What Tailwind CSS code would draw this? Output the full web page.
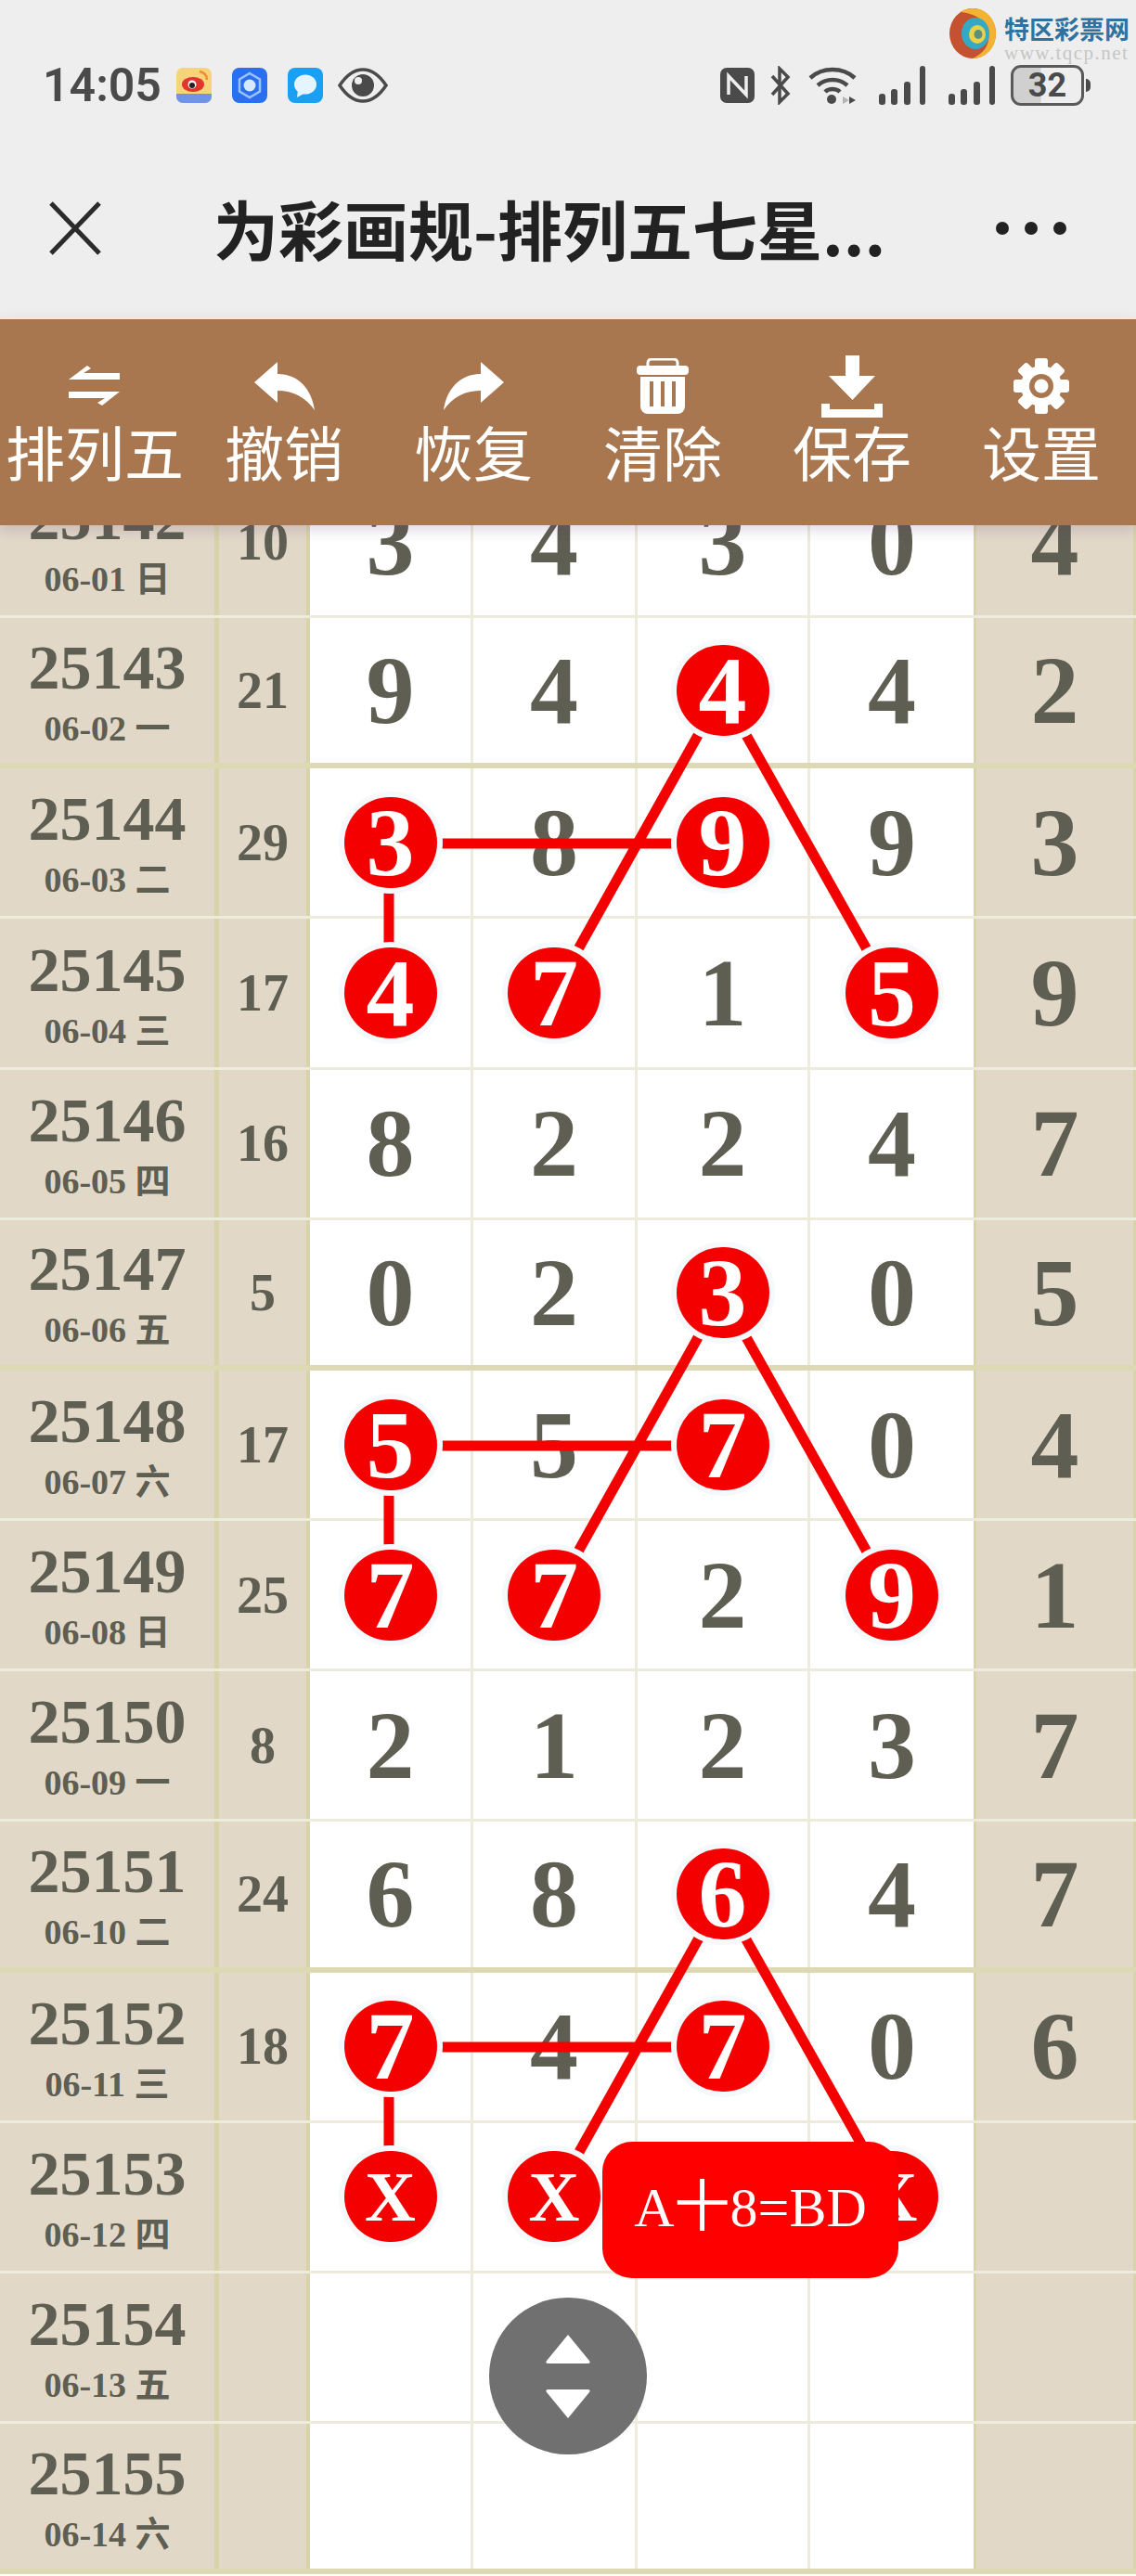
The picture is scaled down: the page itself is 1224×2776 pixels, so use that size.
<!DOCTYPE html>
<html lang="zh">
<head>
<meta charset="UTF-8">
<meta name="viewport" content="width=device-width, initial-scale=1.0">
<title>为彩画规-排列五七星</title>
<script src="https://cdn.jsdelivr.net/npm/@tailwindcss/browser@4"></script>
</head>
<body class="bg-white">
<div class="relative w-[1224px] h-[2776px] overflow-hidden font-['Liberation_Serif','Noto_Sans_CJK_SC',serif]">

  <!-- status bar + title -->
  <header class="relative h-[341px] bg-[#eeeeee] font-['Noto_Sans_CJK_SC',sans-serif]">
    <div class="flex items-center h-[44px] pt-[70px] pl-[46px] box-content">
      <span class="w-[144px] font-['Roboto',sans-serif] font-semibold text-[50px] leading-none text-[#4a4a4a]">14:05</span>
      <svg class="w-[38px] h-[38px]" viewBox="0 0 38 38"><rect width="38" height="38" rx="7" fill="#f5d47c"/><path d="M0 28H38V31a7 7 0 0 1-7 7H7a7 7 0 0 1-7-7Z" fill="#6f93e6"/><ellipse cx="18" cy="18" rx="12" ry="8" fill="#e2352b"/><path d="M25 4C30 5 33 8 33 13" fill="none" stroke="#ef8f2f" stroke-width="2.5"/><circle cx="17" cy="18" r="4.5" fill="#fff"/><circle cx="17" cy="19" r="3" fill="#222"/></svg>
      <svg class="w-[38px] h-[38px] ml-[22px]" viewBox="0 0 38 38"><rect width="38" height="38" rx="8" fill="#2a6ff0"/><path d="M19 6 30 12.5V25.5L19 32 8 25.5V12.5Z" fill="none" stroke="#9cc3ff" stroke-width="2.5"/><circle cx="19" cy="19" r="6.5" fill="#d7e8ff"/></svg>
      <svg class="w-[38px] h-[38px] ml-[22px]" viewBox="0 0 38 38"><rect width="38" height="38" rx="8" fill="#1aa0f2"/><ellipse cx="19" cy="18" rx="12" ry="10.5" fill="#e4f5ff"/><path d="M11 24 10 32 19 27Z" fill="#e4f5ff"/></svg>
      <svg class="w-[54px] h-[38px] ml-[16px]" viewBox="0 0 54 38"><path d="M2 19C10 7 18 2 27 2S44 7 52 19C44 31 36 36 27 36S10 31 2 19Z" fill="none" stroke="#4a4a4a" stroke-width="3.5"/><circle cx="27" cy="19" r="12" fill="#4a4a4a"/><circle cx="22" cy="14" r="4" fill="#eeeeee"/></svg>

      <svg class="w-[37px] h-[38px] ml-[358px]" viewBox="0 0 37 38"><rect width="37" height="38" rx="7" fill="#4a4a4a"/><path d="M9 29V9L28 29V9" fill="none" stroke="#eeeeee" stroke-width="3.5"/></svg>
      <svg class="w-[24px] h-[42px] ml-[16px]" viewBox="0 0 24 42"><path d="M3 11 20 30 11 39V3L20 12 3 31" fill="none" stroke="#4a4a4a" stroke-width="3.5"/></svg>
      <svg class="w-[52px] h-[42px] ml-[18px]" viewBox="0 0 52 42"><path d="M2 13C15 1 37 1 50 13M10 21C19 13 33 13 42 21M18 28C22 24 30 24 34 28" fill="none" stroke="#4a4a4a" stroke-width="4.5"/><circle cx="25" cy="36" r="5" fill="#4a4a4a"/><path d="M37 33 44 37 37 41Z" fill="#b5b5b5"/><path d="M44 33 51 37 44 41Z" fill="#4a4a4a"/></svg>
      <svg class="w-[52px] h-[42px] ml-[23px]" viewBox="0 0 52 42"><rect x="1" y="30" width="7" height="12" rx="3" fill="#4a4a4a"/><rect x="14" y="25" width="7" height="17" rx="3" fill="#4a4a4a"/><rect x="28" y="17" width="7" height="25" rx="3" fill="#4a4a4a"/><rect x="45" y="0" width="6" height="42" rx="3" fill="#4a4a4a"/></svg>
      <svg class="w-[52px] h-[42px] ml-[23px]" viewBox="0 0 52 42"><rect x="1" y="30" width="7" height="12" rx="3" fill="#4a4a4a"/><rect x="14" y="25" width="7" height="17" rx="3" fill="#4a4a4a"/><rect x="28" y="17" width="7" height="25" rx="3" fill="#4a4a4a"/><rect x="45" y="0" width="6" height="42" rx="3" fill="#4a4a4a"/></svg>
      <div class="flex items-center justify-center ml-[16px] w-[79px] h-[44px] rounded-[11px] border-[3px] border-[#5a5a5a] bg-[linear-gradient(90deg,#d0d0d0_0,#d0d0d0_40%,#eeeeee_41%)] font-['Roboto',sans-serif] font-bold text-[36px] leading-none text-[#4a4a4a]">32</div>
      <div class="ml-[2px] w-[5px] h-[14px] rounded-r-full bg-[#4a4a4a]"></div>
    </div>

    <div class="flex items-center h-[100px] mt-[82px] pl-[53px]">
      <svg class="w-[56px] h-[58px]" viewBox="0 0 56 58"><path d="M2 2 54 56M54 2 2 56" fill="none" stroke="#2b2b2b" stroke-width="5"/></svg>
      <h1 class="ml-[121px] w-[760px] font-['Noto_Sans_CJK_SC',sans-serif] font-bold text-[70px] leading-none text-[#222222] whitespace-nowrap">为彩画规-排列五七星...</h1>
      <div class="ml-[83px] flex gap-[17px]">
        <span class="w-[14px] h-[14px] rounded-full bg-[#222222]"></span>
        <span class="w-[14px] h-[14px] rounded-full bg-[#222222]"></span>
        <span class="w-[14px] h-[14px] rounded-full bg-[#222222]"></span>
      </div>
    </div>

    <!-- watermark -->
    <div class="absolute left-[1023px] top-[9px] flex gap-[9px]">
      <svg class="w-[50px] h-[54px]" viewBox="0 0 50 54"><ellipse cx="25" cy="27" rx="25" ry="27" fill="#c4512f"/><path d="M25 0C40 0 50 12 50 27S40 54 25 54C38 48 44 38 42 27S32 6 12 4C16 1 20 0 25 0Z" fill="#f2b233"/><ellipse cx="28" cy="27" rx="15" ry="17" fill="#35a9c4"/><ellipse cx="30" cy="28" rx="9" ry="10" fill="#e8d24a"/><ellipse cx="31" cy="28" rx="4.5" ry="5" fill="#5d8f7c"/></svg>
      <div>
        <div class="mt-[8px] font-['Noto_Sans_CJK_SC',sans-serif] font-bold text-[27px] leading-[27px] text-[#2f729f] whitespace-nowrap">特区彩票网</div>
        <div class="mt-[5px] font-['Liberation_Serif',serif] text-[21px] leading-[16px] tracking-[1.5px] text-[#c6c6c6] whitespace-nowrap">www.tqcp.net</div>
      </div>
    </div>
  </header>

  <!-- toolbar -->
  <nav class="relative z-30 h-[225px] border-t-[3px] border-[#f6e6dc] bg-[#a8764f] shadow-[0_6px_12px_rgba(90,60,110,0.18)] grid grid-cols-6 pt-[39px] font-['Noto_Sans_CJK_SC',sans-serif] text-white text-[64px] leading-[72px] whitespace-nowrap">
    <div class="flex flex-col items-center">
      <div class="flex items-center h-[66px]"><svg class="w-[56px] h-[44px]" viewBox="0 0 56 44" fill="#fff"><path d="M0 15 20 0 24 3 16 8H55V15Z"/><path d="M0 28H55L36 43 31 40 39 35H0Z"/></svg></div>
      <span>排列五</span>
    </div>
    <div class="flex flex-col items-center">
      <div class="flex items-center h-[66px]"><svg class="w-[65px] h-[52px]" viewBox="0 0 65 52" fill="#fff"><path d="M0 22 25 0V13C48 13 62 30 65 52 55 38 42 31 25 31V44Z"/></svg></div>
      <span>撤销</span>
    </div>
    <div class="flex flex-col items-center">
      <div class="flex items-center h-[66px]"><svg class="w-[65px] h-[52px]" viewBox="0 0 65 52" fill="#fff"><path d="M65 22 40 0V13C17 13 3 30 0 52 10 38 23 31 40 31V44Z"/></svg></div>
      <span>恢复</span>
    </div>
    <div class="flex flex-col items-center">
      <div class="flex items-center h-[66px]"><svg class="w-[56px] h-[60px]" viewBox="0 0 56 60" fill="#fff"><path d="M12 9V5a4 4 0 0 1 4-4H40a4 4 0 0 1 4 4V9" fill="none" stroke="#fff" stroke-width="3"/><rect y="8" width="56" height="10" rx="4"/><path d="M4 20H52V52a8 8 0 0 1-8 8H12a8 8 0 0 1-8-8Z"/><rect x="14" y="25" width="4" height="27" fill="#a8764f"/><rect x="26" y="25" width="4" height="27" fill="#a8764f"/><rect x="38" y="25" width="4" height="27" fill="#a8764f"/></svg></div>
      <span>清除</span>
    </div>
    <div class="flex flex-col items-center">
      <div class="flex items-center h-[66px]"><svg class="w-[66px] h-[67px]" viewBox="0 0 66 67" fill="#fff"><path d="M26 0H41V22H58L33.5 48 8 22H26Z"/><path d="M0 52H9V58H57V52H66V67H0Z"/></svg></div>
      <span>保存</span>
    </div>
    <div class="flex flex-col items-center">
      <div class="flex items-center h-[66px]"><svg class="w-[60px] h-[60px]" viewBox="0 0 60 60" fill="#fff"><circle cx="30" cy="30" r="22"/><g><rect x="23" y="0" width="14" height="60" rx="3"/><rect x="23" y="0" width="14" height="60" rx="3" transform="rotate(45 30 30)"/><rect x="23" y="0" width="14" height="60" rx="3" transform="rotate(90 30 30)"/><rect x="23" y="0" width="14" height="60" rx="3" transform="rotate(135 30 30)"/></g><circle cx="30" cy="30" r="13" fill="#a8764f"/><circle cx="30" cy="30" r="7.5" fill="#fff"/></svg></div>
      <span>设置</span>
    </div>
  </nav>

  <!-- lines between the marked numbers -->
  <svg class="absolute left-0 top-0 z-10" width="1224" height="2776" viewBox="0 0 1224 2776" fill="none" stroke="#f50000" stroke-width="11">
    <path d="M596 1071 778 746 961 1071M419 909H778M419 909V1071"/>
    <path d="M596 1720 778 1395 961 1720M419 1558H778M419 1558V1720"/>
    <path d="M596 2369 778 2044 961 2369M419 2206H778M419 2206V2369"/>
  </svg>

  <!-- draw table -->
  <main class="-mt-[62px] text-[#5e5e52] font-bold [&>div]:grid [&>div]:grid-cols-[236px_98px_176px_177px_186px_179px_172px] [&>div]:h-[162.17px] [&>div]:border-b-[3px] [&>div]:border-[#ecebdc] [&>div:nth-child(4n+2)]:border-b-[6px] [&>div:nth-child(4n+2)]:border-[#ddd9b5] *:*:flex *:*:items-center *:*:justify-center *:*:text-[104px] *:*:leading-none [&>div>*:nth-child(-n+2)]:bg-[#e2d8c8] [&>div>*:nth-child(7)]:bg-[#e2d8c8] [&>div>*:nth-child(1)]:flex-col [&>div>*:nth-child(1)]:border-r-[5px] [&>div>*:nth-child(2)]:border-r-[4px] [&>div>*:nth-child(2)]:text-[56px] [&>div>*:nth-child(n+3)]:border-r-[3px] [&>div>*:nth-child(6)]:border-r-[5px] [&>div>*:nth-child(7)]:border-r-0 [&>div>*]:border-[#d8d3ab] [&>div>*:nth-child(n+3):nth-child(-n+5)]:border-[#ecebdc]">

    <div>
      <div><b class="text-[68px]">25142</b><span class="mt-[13px] text-[38px]">06-01 日</span></div><div>10</div><div>3</div><div>4</div><div>3</div><div>0</div><div>4</div>
    </div>
    <div>
      <div><b class="text-[68px]">25143</b><span class="mt-[13px] text-[38px]">06-02 一</span></div><div>21</div><div>9</div><div>4</div><div><span class="relative z-20 flex items-center justify-center w-[100px] h-[98px] rounded-full bg-[#f50000] text-white ring-[6px] ring-[#f6f9fb]">4</span></div><div>4</div><div>2</div>
    </div>
    <div>
      <div><b class="text-[68px]">25144</b><span class="mt-[13px] text-[38px]">06-03 二</span></div><div>29</div><div><span class="relative z-20 flex items-center justify-center w-[100px] h-[98px] rounded-full bg-[#f50000] text-white ring-[6px] ring-[#f6f9fb]">3</span></div><div>8</div><div><span class="relative z-20 flex items-center justify-center w-[100px] h-[98px] rounded-full bg-[#f50000] text-white ring-[6px] ring-[#f6f9fb]">9</span></div><div>9</div><div>3</div>
    </div>
    <div>
      <div><b class="text-[68px]">25145</b><span class="mt-[13px] text-[38px]">06-04 三</span></div><div>17</div><div><span class="relative z-20 flex items-center justify-center w-[100px] h-[98px] rounded-full bg-[#f50000] text-white ring-[6px] ring-[#f6f9fb]">4</span></div><div><span class="relative z-20 flex items-center justify-center w-[100px] h-[98px] rounded-full bg-[#f50000] text-white ring-[6px] ring-[#f6f9fb]">7</span></div><div>1</div><div><span class="relative z-20 flex items-center justify-center w-[100px] h-[98px] rounded-full bg-[#f50000] text-white ring-[6px] ring-[#f6f9fb]">5</span></div><div>9</div>
    </div>
    <div>
      <div><b class="text-[68px]">25146</b><span class="mt-[13px] text-[38px]">06-05 四</span></div><div>16</div><div>8</div><div>2</div><div>2</div><div>4</div><div>7</div>
    </div>
    <div>
      <div><b class="text-[68px]">25147</b><span class="mt-[13px] text-[38px]">06-06 五</span></div><div>5</div><div>0</div><div>2</div><div><span class="relative z-20 flex items-center justify-center w-[100px] h-[98px] rounded-full bg-[#f50000] text-white ring-[6px] ring-[#f6f9fb]">3</span></div><div>0</div><div>5</div>
    </div>
    <div>
      <div><b class="text-[68px]">25148</b><span class="mt-[13px] text-[38px]">06-07 六</span></div><div>17</div><div><span class="relative z-20 flex items-center justify-center w-[100px] h-[98px] rounded-full bg-[#f50000] text-white ring-[6px] ring-[#f6f9fb]">5</span></div><div>5</div><div><span class="relative z-20 flex items-center justify-center w-[100px] h-[98px] rounded-full bg-[#f50000] text-white ring-[6px] ring-[#f6f9fb]">7</span></div><div>0</div><div>4</div>
    </div>
    <div>
      <div><b class="text-[68px]">25149</b><span class="mt-[13px] text-[38px]">06-08 日</span></div><div>25</div><div><span class="relative z-20 flex items-center justify-center w-[100px] h-[98px] rounded-full bg-[#f50000] text-white ring-[6px] ring-[#f6f9fb]">7</span></div><div><span class="relative z-20 flex items-center justify-center w-[100px] h-[98px] rounded-full bg-[#f50000] text-white ring-[6px] ring-[#f6f9fb]">7</span></div><div>2</div><div><span class="relative z-20 flex items-center justify-center w-[100px] h-[98px] rounded-full bg-[#f50000] text-white ring-[6px] ring-[#f6f9fb]">9</span></div><div>1</div>
    </div>
    <div>
      <div><b class="text-[68px]">25150</b><span class="mt-[13px] text-[38px]">06-09 一</span></div><div>8</div><div>2</div><div>1</div><div>2</div><div>3</div><div>7</div>
    </div>
    <div>
      <div><b class="text-[68px]">25151</b><span class="mt-[13px] text-[38px]">06-10 二</span></div><div>24</div><div>6</div><div>8</div><div><span class="relative z-20 flex items-center justify-center w-[100px] h-[98px] rounded-full bg-[#f50000] text-white ring-[6px] ring-[#f6f9fb]">6</span></div><div>4</div><div>7</div>
    </div>
    <div>
      <div><b class="text-[68px]">25152</b><span class="mt-[13px] text-[38px]">06-11 三</span></div><div>18</div><div><span class="relative z-20 flex items-center justify-center w-[100px] h-[98px] rounded-full bg-[#f50000] text-white ring-[6px] ring-[#f6f9fb]">7</span></div><div>4</div><div><span class="relative z-20 flex items-center justify-center w-[100px] h-[98px] rounded-full bg-[#f50000] text-white ring-[6px] ring-[#f6f9fb]">7</span></div><div>0</div><div>6</div>
    </div>
    <div>
      <div><b class="text-[68px]">25153</b><span class="mt-[13px] text-[38px]">06-12 四</span></div><div></div><div><span class="relative z-20 flex items-center justify-center w-[100px] h-[98px] rounded-full bg-[#f50000] text-white text-[76px] ring-[6px] ring-[#f6f9fb]">X</span></div><div><span class="relative z-20 flex items-center justify-center w-[100px] h-[98px] rounded-full bg-[#f50000] text-white text-[76px] ring-[6px] ring-[#f6f9fb]">X</span></div><div></div><div><span class="relative z-20 flex items-center justify-center w-[100px] h-[98px] rounded-full bg-[#f50000] text-white text-[76px] ring-[6px] ring-[#f6f9fb]">X</span></div><div></div>
    </div>
    <div>
      <div><b class="text-[68px]">25154</b><span class="mt-[13px] text-[38px]">06-13 五</span></div><div></div><div></div><div></div><div></div><div></div><div></div>
    </div>
    <div>
      <div><b class="text-[68px]">25155</b><span class="mt-[13px] text-[38px]">06-14 六</span></div><div></div><div></div><div></div><div></div><div></div><div></div>
    </div>
  </main>

  <!-- tooltip over the last marker -->
  <div class="absolute z-40 left-[649px] top-[2308px] w-[319px] h-[147px] pt-[36px] rounded-[32px] bg-[#fe0000] text-center text-white text-[60px] leading-[70px] font-['Liberation_Serif','Noto_Sans_CJK_SC',serif]">A十8=BD</div>

  <!-- scroll button -->
  <button class="absolute z-40 left-[527px] top-[2476px] flex flex-col items-center justify-center gap-[24px] w-[170px] h-[169px] rounded-full bg-[#707070]">
    <svg class="w-[50px] h-[35px]" viewBox="0 0 50 35"><path d="M25 2 48 30Q50 33 46 33H4Q0 33 2 30Z" fill="#fff"/></svg>
    <svg class="w-[50px] h-[35px]" viewBox="0 0 50 35"><path d="M25 33 48 5Q50 2 46 2H4Q0 2 2 5Z" fill="#fff"/></svg>
  </button>
</div>
</body>
</html>
